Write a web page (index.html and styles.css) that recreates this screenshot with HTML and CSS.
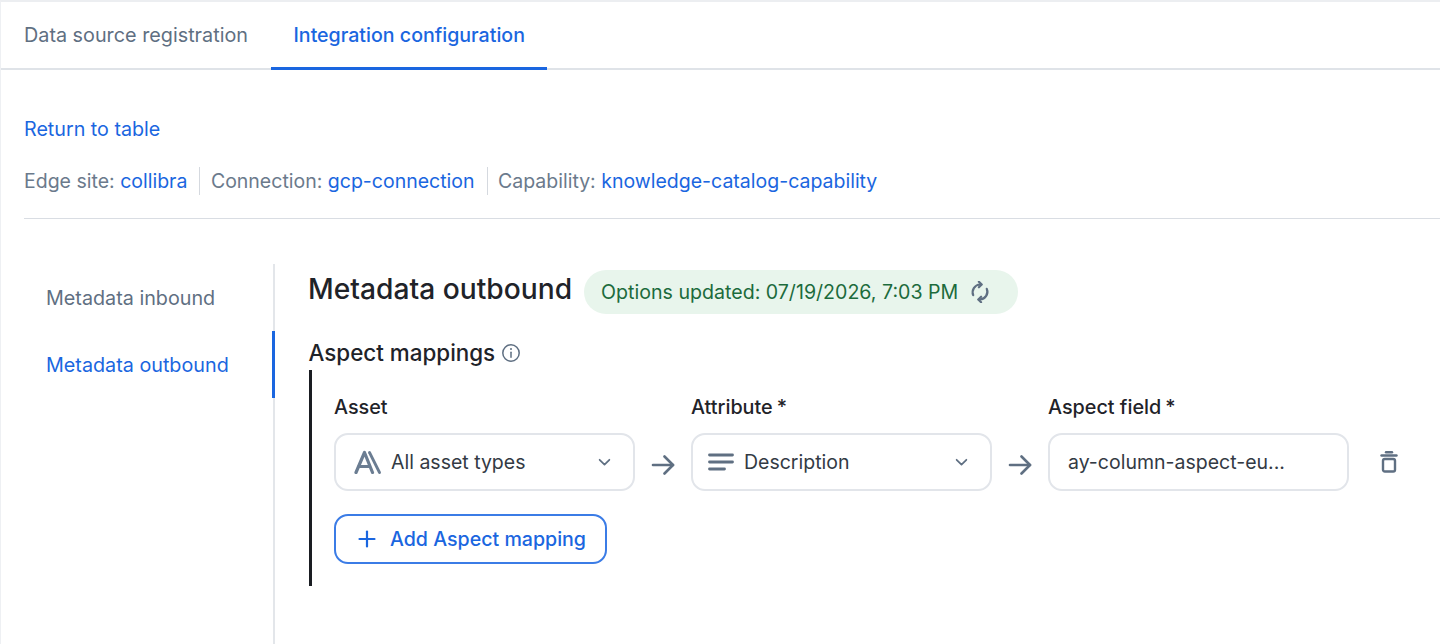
FILE: index.html
```html
<!DOCTYPE html>
<html lang="en">
<head>
<meta charset="utf-8">
<title>Integration configuration</title>
<link rel="stylesheet" href="styles.css">
</head>
<body>
<div class="page">
  <nav class="tabs">
    <a class="tab">Data source registration</a>
    <a class="tab tab-active">Integration configuration</a>
  </nav>
  <main class="content">
    <a class="return-link">Return to table</a>
    <div class="crumbs">
      <span class="crumb">Edge site: <a class="link">collibra</a></span>
      <span class="crumb">Connection: <a class="link">gcp-connection</a></span>
      <span class="crumb">Capability: <a class="link">knowledge-catalog-capability</a></span>
    </div>
    <div class="split">
      <aside class="side">
        <a class="side-item">Metadata inbound</a>
        <a class="side-item side-active">Metadata outbound</a>
      </aside>
      <section class="panel">
        <div class="title-row">
          <h1 class="title">Metadata outbound</h1>
          <div class="badge">
            <span>Options updated: 07/19/2026, 7:03 PM</span>
            <svg class="ico-sync" viewBox="0 0 24 24" fill="none" stroke="#5f6f82" stroke-width="2.4" stroke-linecap="round" stroke-linejoin="round"><path d="M4.600 15.500A8.500 8.500 0 0 1 12 3.800h1.500"/><path d="M10.800 .8l3 3-3 3"/><path d="M19.400 8.500A8.500 8.500 0 0 1 12 20.200h-1.500"/><path d="M13.200 23.200l-3-3 3-3"/></svg>
          </div>
        </div>
        <div class="sub-row">
          <h2 class="sub">Aspect mappings</h2>
          <svg class="ico-info" viewBox="0 0 20 20" fill="none" stroke="#5f6f82" stroke-width="1.500" stroke-linecap="round"><circle cx="10" cy="10" r="8.200"/><path d="M10 9.200v5"/><path d="M10 5.900v.2" stroke-width="2"/></svg>
        </div>
        <div class="mapping">
          <div class="fields">
            <div class="field">
              <label class="label">Asset</label>
              <div class="box">
                <svg class="ico-asset" viewBox="0 0 28 24" fill="none" stroke="#6b7d92" stroke-width="3.200" stroke-linejoin="round" stroke-linecap="round"><path d="M2 22.500L10.500 2.500L18.500 22.500"/><path d="M5 16.500h10"/><path d="M15.500 2.500L25.500 22.500" stroke-width="2.800"/></svg>
                <span class="val">All asset types</span>
                <svg class="ico-chev" viewBox="0 0 12 8" fill="none" stroke="#5f6f82" stroke-width="1.600" stroke-linecap="round" stroke-linejoin="round"><path d="M1.500 1.500L6 6l4.500-4.500"/></svg>
              </div>
            </div>
            <svg class="ico-arrow" viewBox="0 0 24 20" fill="none" stroke="#5f6f82" stroke-width="2.600" stroke-linecap="round" stroke-linejoin="round"><path d="M2 10h20"/><path d="M13.500 1.500L22 10l-8.500 8.500"/></svg>
            <div class="field">
              <label class="label">Attribute<span class="req">*</span></label>
              <div class="box box-lines">
                <svg class="ico-lines" viewBox="0 0 26 18" fill="none" stroke="#5f6f82" stroke-width="2.800" stroke-linecap="round"><path d="M1.500 2h23"/><path d="M1.500 9h23"/><path d="M1.500 16h15"/></svg>
                <span class="val">Description</span>
                <svg class="ico-chev" viewBox="0 0 12 8" fill="none" stroke="#5f6f82" stroke-width="1.600" stroke-linecap="round" stroke-linejoin="round"><path d="M1.500 1.500L6 6l4.500-4.500"/></svg>
              </div>
            </div>
            <svg class="ico-arrow" viewBox="0 0 24 20" fill="none" stroke="#5f6f82" stroke-width="2.600" stroke-linecap="round" stroke-linejoin="round"><path d="M2 10h20"/><path d="M13.500 1.500L22 10l-8.500 8.500"/></svg>
            <div class="field">
              <label class="label">Aspect field<span class="req">*</span></label>
              <div class="box"><span class="val">ay-column-aspect-eu...</span></div>
            </div>
            <svg class="ico-trash" viewBox="0 0 18 22" fill="none" stroke="#5f6f82" stroke-width="2.400" stroke-linecap="round" stroke-linejoin="round"><path d="M1.500 4.500h15"/><path d="M6 1.200h6"/><rect x="3" y="8" width="12" height="12.500" rx="1.800"/></svg>
          </div>
          <button class="add-btn" type="button">
            <svg class="ico-plus" viewBox="0 0 18 18" fill="none" stroke="#1a66e0" stroke-width="2.200" stroke-linecap="round"><path d="M9 1.500v15"/><path d="M1.500 9h15"/></svg>
            <span>Add Aspect mapping</span>
          </button>
        </div>
      </section>
    </div>
  </main>
</div>
</body>
</html>
```
FILE: styles.css
```css
* { box-sizing: border-box; }
html, body { margin: 0; height: 100%; background: #fff; }
body { font-family: Inter, "Liberation Sans", sans-serif; color: #1f2329; overflow: hidden; }
.page { height: 644px; overflow: hidden; border-top: 2px solid #eceef1; border-left: 1px solid #eef0f3; display: flex; flex-direction: column; }
.tabs { display: flex; height: 68px; border-bottom: 2px solid #dfe3e8; flex: none; }
.tab { display: flex; align-items: center; font-size: 19.800px; padding: 0 23px; color: #5f6f82; margin-bottom: -2px; border-bottom: 3px solid transparent; }
.tab-active { color: #1a66e0; border-bottom-color: #1a66e0; font-weight: 500; font-size: 19.600px; padding: 0 22.500px; }
.content { flex: 1; padding: 44px 0 0 23px; display: flex; flex-direction: column; min-height: 0; }
.return-link { color: #1a66e0; font-size: 19.700px; line-height: 30px; }
.crumbs { display: flex; align-items: center; margin-top: 23px; padding-bottom: 23px; border-bottom: 1px solid #d9dde3; height: 52px; font-size: 19.500px; color: #6b7a8c; }
.crumb { display: block; line-height: 28px; padding-right: 12px; margin-right: 10.500px; border-right: 1px solid #d5d9df; white-space: nowrap; }
.crumb:last-child { border-right: 0; }
.link { color: #1a66e0; }
.split { display: flex; flex: 1; margin-top: 45px; min-height: 0; }
.side { width: 251px; flex: none; border-right: 2px solid #e3e6ea; display: flex; flex-direction: column; }
.side-item { height: 67px; display: flex; align-items: center; padding-left: 22px; font-size: 19.750px; color: #5f6f82; margin-right: -2px; border-right: 3px solid transparent; }
.side-active { color: #1a66e0; border-right-color: #1a66e0; }
.panel { flex: 1; padding: 6px 0 0 34px; min-width: 0; }
.title-row { display: flex; align-items: center; gap: 12px; }
.title { margin: 0 0 6px -1px; font-size: 28.200px; line-height: 38px; font-weight: 500; color: #1f2329; }
.badge { display: flex; align-items: center; gap: 11px; height: 44px; padding: 0 27px 0 17px; background: #e8f5ec; border-radius: 22px; color: #1c6b3c; font-size: 19.600px; white-space: nowrap; }
.ico-sync { width: 22px; height: 22px; }
.sub-row { display: flex; align-items: center; gap: 6px; margin: 24px 0 0 -0.500px; height: 30px; }
.sub { margin: 0; font-size: 22.400px; line-height: 30px; font-weight: 500; color: #1f2329; }
.ico-info { width: 20px; height: 20px; }
.mapping { margin-top: 2px; height: 216px; border-left: 3px solid #1a1d22; padding: 24px 0 0 22px; }
.fields { display: flex; align-items: flex-end; }
.field { width: 301px; flex: none; display: flex; flex-direction: column; }
.label { font-size: 19.800px; font-weight: 500; line-height: 26px; color: #1f2329; margin-bottom: 13px; }
.req { margin-left: 4px; }
.box { height: 58px; border: 2px solid #e2e5ea; border-radius: 14px; display: flex; align-items: center; padding: 0 22px 0 18px; font-size: 19.500px; color: #333a44; }
.box-lines { padding-left: 15px; }
.val { flex: 1; white-space: nowrap; }
.ico-asset { width: 28px; height: 24px; margin-right: 9px; }
.ico-lines { width: 26px; height: 18px; margin-right: 10px; }
.ico-chev { width: 13px; height: 9px; }
.ico-arrow { width: 24px; height: 20px; margin: 0 16px 16px 16px; flex: none; }
.ico-trash { width: 18px; height: 22px; margin: 0 0 18px 31px; flex: none; }
.add-btn { display: flex; align-items: center; gap: 14.500px; margin-top: 23px; width: 273px; height: 50px; padding: 0 0 0 21.500px; background: #fff; border: 2px solid #3b7ce6; border-radius: 14px; color: #1a66e0; font: 500 19.600px Inter, "Liberation Sans", sans-serif; }
.ico-plus { width: 18px; height: 18px; }
```
